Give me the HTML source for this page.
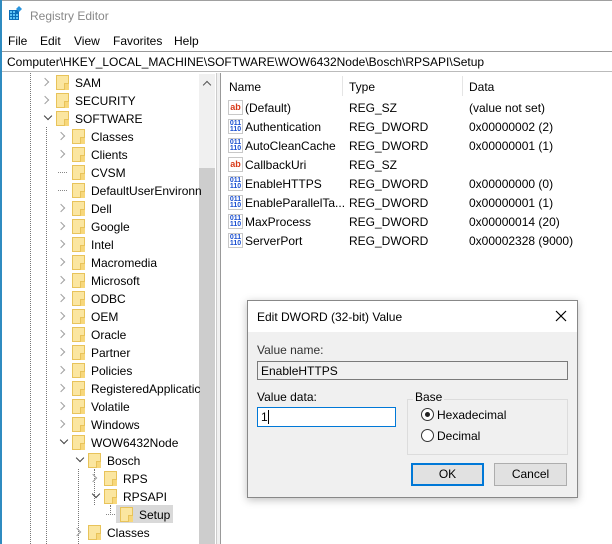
<!DOCTYPE html>
<html><head><meta charset="utf-8"><style>
*{margin:0;padding:0;box-sizing:border-box}
body{width:612px;height:544px;overflow:hidden;background:#fff;font-family:"Liberation Sans",sans-serif;font-size:12px;color:#000;position:relative}
.a{position:absolute;white-space:nowrap}
.f{position:absolute;width:13px;height:15px;background:#fbe6a0;border:1px solid #e8c35a}
.f:after{content:"";position:absolute;right:-1px;bottom:-1px;width:4px;height:6px;border-left:1px solid #e8c35a;border-top:1px solid #e8c35a;background:#f7d77a}
.ch{position:absolute;width:6px;height:6px;border-right:1.5px solid #a0a0a0;border-bottom:1.5px solid #a0a0a0}
.r{transform:rotate(-45deg)}
.d{transform:rotate(45deg);border-color:#404040}
.dot{position:absolute;border-top:1px dotted #888;width:9px}
.vd{position:absolute;border-left:1px dotted #777}
.ico{position:absolute;width:15px;height:15px;font-size:9px;font-weight:bold;line-height:13px;text-align:center;border:1px solid #c8c8c8;background:#fff}
</style></head><body>
<div class="a" style="left:0;top:0;width:612px;height:1px;background:#a0a0a0"></div>
<div class="a" style="left:0;top:0;width:2px;height:544px;background:#2f8bc0"></div>
<svg class="a" style="left:9px;top:6px" width="14" height="15" viewBox="0 0 14 15"><rect x="0" y="4" width="10" height="10" fill="#0a6db8"/><g fill="#5cc3f5"><rect x="1" y="5" width="2" height="2"/><rect x="4" y="5" width="2" height="2"/><rect x="1" y="8" width="2" height="2"/><rect x="4" y="8" width="2" height="2"/><rect x="7" y="8" width="2" height="2"/><rect x="1" y="11" width="2" height="2"/><rect x="4" y="11" width="2" height="2"/><rect x="7" y="11" width="2" height="2"/></g><path d="M10 0l3 3-3 3-3-3z" fill="#2a96e0"/></svg>
<div class="a" style="left:30px;top:9px;font-size:12px;color:#888">Registry Editor</div>
<div class="a" style="left:8px;top:34px">File</div>
<div class="a" style="left:40px;top:34px">Edit</div>
<div class="a" style="left:74px;top:34px">View</div>
<div class="a" style="left:113px;top:34px">Favorites</div>
<div class="a" style="left:174px;top:34px">Help</div>
<div class="a" style="left:2px;top:51px;width:610px;height:21px;border-top:1px solid #999;border-bottom:1px solid #bbb"></div>
<div class="a" style="left:7px;top:55px">Computer\HKEY_LOCAL_MACHINE\SOFTWARE\WOW6432Node\Bosch\RPSAPI\Setup</div>
<div class="a" style="left:199px;top:74px;width:16px;height:470px;background:#f0f0f0"></div>
<div class="a" style="left:199px;top:168px;width:16px;height:376px;background:#cdcdcd"></div>
<div class="a" style="left:204px;top:82px;width:6px;height:6px;border-left:1.5px solid #555;border-top:1.5px solid #555;transform:rotate(45deg)"></div>
<div class="a" style="left:216px;top:73px;width:4px;height:471px;background:#f0f0f0;border-left:1px solid #ccc"></div>
<div class="a" style="left:220px;top:73px;width:1px;height:471px;background:#999"></div>
<div class="vd" style="left:30px;top:73px;height:471px"></div>
<div class="vd" style="left:46px;top:127px;height:417px"></div>
<div class="vd" style="left:78px;top:469px;height:75px"></div>
<div class="vd" style="left:94px;top:469px;height:36px"></div>
<div class="vd" style="left:110px;top:505px;height:10px"></div>
<div class="a" style="left:116px;top:505px;width:57px;height:18px;background:#d9d9d9"></div>
<div id="tree"></div>
<script>
var t=[[1,'r','SAM'],[1,'r','SECURITY'],[1,'d','SOFTWARE'],[2,'r','Classes'],[2,'r','Clients'],[2,'.','CVSM'],[2,'.','DefaultUserEnvironn'],[2,'r','Dell'],[2,'r','Google'],[2,'r','Intel'],[2,'r','Macromedia'],[2,'r','Microsoft'],[2,'r','ODBC'],[2,'r','OEM'],[2,'r','Oracle'],[2,'r','Partner'],[2,'r','Policies'],[2,'r','RegisteredApplicatic'],[2,'r','Volatile'],[2,'r','Windows'],[2,'d','WOW6432Node'],[3,'d','Bosch'],[4,'r','RPS'],[4,'d','RPSAPI'],[5,'.','Setup'],[3,'r','Classes']];
var h='';t.forEach(function(e,i){var top=73+18*i,l=e[0],cx=45+16*(l-1),fx=56+16*(l-1);
if(e[1]=='r')h+='<div class="ch r" style="left:'+(cx-3)+'px;top:'+(top+6)+'px"></div>';
else if(e[1]=='d')h+='<div class="ch d" style="left:'+(cx)+'px;top:'+(top+4)+'px"></div>';
else h+='<div class="dot" style="left:'+(cx-3)+'px;top:'+(top+9)+'px"></div>';
h+='<div class="f" style="left:'+fx+'px;top:'+(top+2)+'px"></div><div class="a" style="left:'+(fx+19)+'px;top:'+(top+3)+'px;z-index:2">'+e[2]+'</div>';});
document.getElementById('tree').innerHTML=h;
</script>
<div class="a" style="left:229px;top:80px">Name</div>
<div class="a" style="left:342px;top:76px;width:1px;height:20px;background:#e5e5e5"></div>
<div class="a" style="left:349px;top:80px">Type</div>
<div class="a" style="left:462px;top:76px;width:1px;height:20px;background:#e5e5e5"></div>
<div class="a" style="left:469px;top:80px">Data</div>
<div id="list"></div>
<script>
var L=[['s','(Default)','REG_SZ','(value not set)'],['d','Authentication','REG_DWORD','0x00000002 (2)'],['d','AutoCleanCache','REG_DWORD','0x00000001 (1)'],['s','CallbackUri','REG_SZ',''],['d','EnableHTTPS','REG_DWORD','0x00000000 (0)'],['d','EnableParallelTa...','REG_DWORD','0x00000001 (1)'],['d','MaxProcess','REG_DWORD','0x00000014 (20)'],['d','ServerPort','REG_DWORD','0x00002328 (9000)']];
var g='';L.forEach(function(e,i){var y=100+19*i;
g+=e[0]=='s'?'<div class="ico" style="left:228px;top:'+y+'px;color:#d83b1a">ab</div>':'<div class="ico" style="left:228px;top:'+y+'px;color:#1a4fd0;font-size:7px;line-height:6px;padding-top:1px">011<br>110</div>';
g+='<div class="a" style="left:245px;top:'+(y+1)+'px">'+e[1]+'</div><div class="a" style="left:349px;top:'+(y+1)+'px">'+e[2]+'</div><div class="a" style="left:469px;top:'+(y+1)+'px">'+e[3]+'</div>';});
document.getElementById('list').innerHTML=g;
</script>
<div class="a" style="left:247px;top:300px;width:331px;height:198px;background:#f0f0f0;border:1px solid #888;box-shadow:0 2px 8px rgba(0,0,0,.25)">
<div class="a" style="left:0;top:0;width:329px;height:31px;background:#fff"></div>
<div class="a" style="left:9px;top:9px">Edit DWORD (32-bit) Value</div>
<svg class="a" style="left:307px;top:9px" width="12" height="12"><path d="M1 1L11 11M11 1L1 11" stroke="#000" stroke-width="1.2"/></svg>
<div class="a" style="left:9px;top:42px;color:#333">Value name:</div>
<div class="a" style="left:9px;top:60px;width:311px;height:19px;border:1px solid #7a7a7a;background:#f0f0f0"></div>
<div class="a" style="left:13px;top:63px">EnableHTTPS</div>
<div class="a" style="left:9px;top:89px">Value data:</div>
<div class="a" style="left:9px;top:106px;width:139px;height:20px;border:1px solid #0078d7;background:#fff"></div>
<div class="a" style="left:13px;top:109px">1</div>
<div class="a" style="left:20px;top:109px;width:1px;height:14px;background:#000"></div>
<div class="a" style="left:159px;top:98px;width:161px;height:56px;border:1px solid #dcdcdc"></div>
<div class="a" style="left:165px;top:89px;background:#f0f0f0;padding:0 2px">Base</div>
<div class="a" style="left:173px;top:107px;width:13px;height:13px;border:1px solid #333;border-radius:50%;background:#fff"></div>
<div class="a" style="left:177px;top:111px;width:5px;height:5px;border-radius:50%;background:#222"></div>
<div class="a" style="left:189px;top:107px">Hexadecimal</div>
<div class="a" style="left:173px;top:128px;width:13px;height:13px;border:1px solid #333;border-radius:50%;background:#fff"></div>
<div class="a" style="left:189px;top:128px">Decimal</div>
<div class="a" style="left:163px;top:162px;width:73px;height:23px;border:2px solid #0078d7;background:#e1e1e1;text-align:center;line-height:19px">OK</div>
<div class="a" style="left:246px;top:162px;width:73px;height:23px;border:1px solid #adadad;background:#e1e1e1;text-align:center;line-height:21px">Cancel</div>
</div>
</body></html>
